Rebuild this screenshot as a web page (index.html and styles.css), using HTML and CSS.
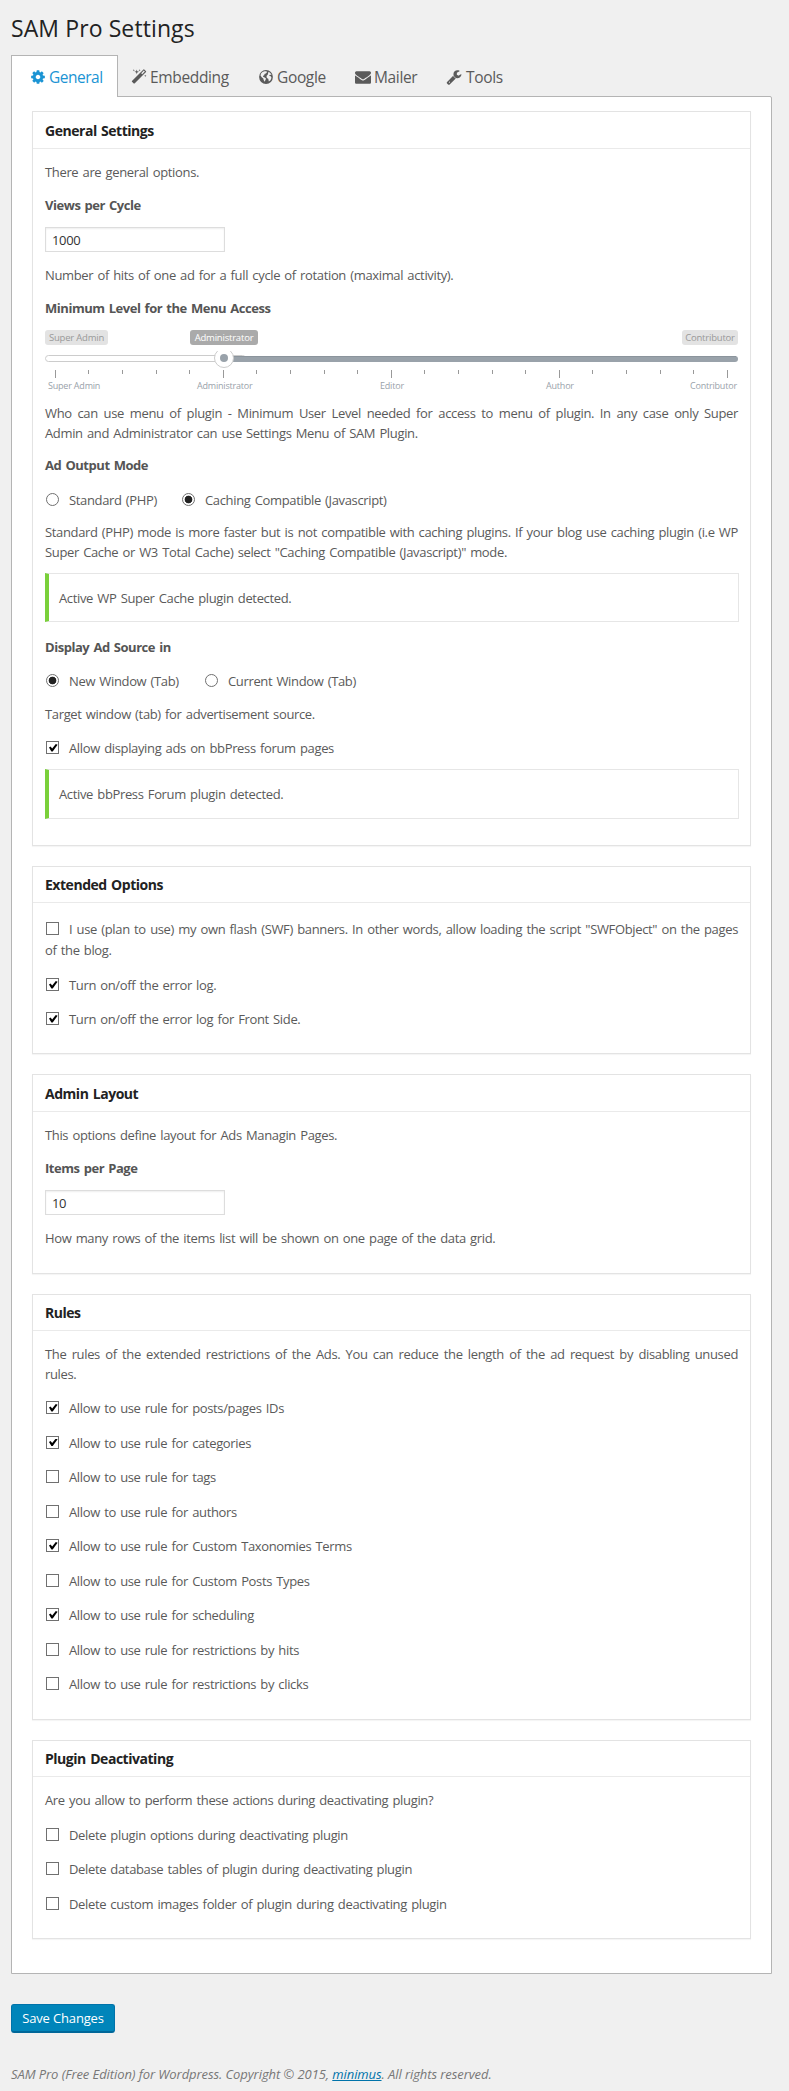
FILE: index.html
```html
<!DOCTYPE html>
<html lang="en">
<head>
<meta charset="utf-8">
<title>SAM Pro Settings</title>
<link rel="stylesheet" href="styles.css">
</head>
<body>
<h1 class="title">SAM Pro Settings</h1>
<nav class="tabs">
  <a class="tab active"><svg class="ico" viewBox="0 0 1792 1792"><path d="M1152 896q0-106-75-181t-181-75-181 75-75 181 75 181 181 75 181-75 75-181zm512-109v222q0 12-8 23t-20 13l-185 28q-19 54-39 91 35 50 107 138 10 12 10 25t-9 23q-27 37-99 108t-94 71q-12 0-26-9l-138-108q-44 23-91 38-16 136-29 186-7 28-36 28h-222q-14 0-24.500-8.500t-11.500-21.500l-28-184q-49-16-90-37l-141 107q-10 9-25 9-14 0-25-11-126-114-165-168-7-10-7-23 0-12 8-23 15-21 51-66.500t54-70.500q-27-50-41-99l-183-27q-13-2-21-12.500t-8-23.500v-222q0-12 8-23t19-13l186-28q14-46 39-92-40-57-107-138-10-12-10-24 0-10 9-23 26-36 98.500-107.500t94.500-71.500q13 0 26 10l138 107q44-23 91-38 16-136 29-186 7-28 36-28h222q14 0 24.500 8.500t11.500 21.500l28 184q49 16 90 37l142-107q9-9 24-9 13 0 25 10 129 119 165 170 7 8 7 22 0 12-8 23-15 21-51 66.500t-54 70.500q26 50 41 98l183 28q13 2 21 12.500t8 23.500z"/></svg><span>General</span></a>
  <a class="tab emb"><svg class="ico" viewBox="0 0 1792 1792"><path d="M1254 581l293-293-107-107-293 293zm447-293q0 27-18 45l-1286 1286q-18 18-45 18t-45-18l-198-198q-18-18-18-45t18-45l1286-1286q18-18 45-18t45 18l198 198q18 18 18 45zm-1351-190l98 30-98 30-30 98-30-98-98-30 98-30 30-98zm350 162l196 60-196 60-60 196-60-196-196-60 196-60 60-196zm930 478l98 30-98 30-30 98-30-98-98-30 98-30 30-98zm-640-640l98 30-98 30-30 98-30-98-98-30 98-30 30-98z"/></svg><span>Embedding</span></a>
  <a class="tab goo"><svg class="ico" viewBox="0 0 16 16"><circle cx="8" cy="8" r="6.900"/><path class="land" d="M4.500 3 6.500 2.200 8.600 2.300 8.900 3.400 7.800 4.400 6.300 5 6.500 6 5.200 6.800 5 7.800 6.600 8.500 8 9.500 7.500 11 6.600 12.800 5.700 11 5.300 9.500 3.700 8.300 2.500 6.600 3 4.600zM10.500 2.800l1.800 1.300 1.300 2-1.600-.4-1 .9 1.700.6.800 1.500-1 2.500-1.700 1.200-.5-2.600-1.500-.8-.3-2 1.300-1.500z"/></svg><span>Google</span></a>
  <a class="tab mai"><svg class="ico" viewBox="0 0 1792 1792"><path d="M1792 710v794q0 66-47 113t-113 47h-1472q-66 0-113-47t-47-113v-794q44 49 101 87 362 246 497 345 57 42 92.500 65.500t94.500 48 110 24.500h2q51 0 110-24.500t94.500-48 92.500-65.500q170-123 498-345 57-39 100-87zm0-294q0 79-49 151t-122 123q-376 261-468 325-10 7-42.500 31t-54 38.500-52 32.500-57.500 27-50 9h-2q-23 0-50-9t-57.500-27-52-32.500-54-38.500-42.500-31q-91-64-262-182.500t-205-142.500q-62-42-117-115.500t-55-136.500q0-78 41.500-130t118.500-52h1472q65 0 112.500 47t47.500 113z"/></svg><span>Mailer</span></a>
  <a class="tab too"><svg class="ico" viewBox="0 0 1792 1792"><path d="M448 1472q0-26-19-45t-45-19-45 19-19 45 19 45 45 19 45-19 19-45zm644-420l-682 682q-37 37-90 37-52 0-91-37l-106-108q-38-36-38-90 0-53 38-91l681-681q39 98 114.500 173.500t173.500 114.500zm634-435q0 39-23 106-47 134-164.500 217.500t-258.500 83.500q-185 0-316.500-131.500t-131.500-316.500 131.500-316.500 316.500-131.500q58 0 121.500 16.500t107.500 46.500q16 11 16 28t-16 28l-293 169v224l193 107q5-3 79-48.500t135.500-81 70.500-35.500q15 0 23.500 10t8.500 25z"/></svg><span>Tools</span></a>
</nav>
<main class="panel">
  <section class="box general">
    <h2>General Settings</h2>
    <p>There are general options.</p>
    <h3>Views per Cycle</h3>
    <div class="field">1000</div>
    <p>Number of hits of one ad for a full cycle of rotation (maximal activity).</p>
    <h3>Minimum Level for the Menu Access</h3>
    <div class="slider">
      <div class="tips"><span class="tip">Super Admin</span><span class="tip now">Administrator</span><span class="tip last">Contributor</span></div>
      <svg class="rail" width="694" height="28" viewBox="0 0 694 28">
        <rect x=".5" y="4.500" width="200" height="6" rx="3" fill="#fff" stroke="#ccc"/>
        <path d="M180 5H690a3 3 0 0 1 0 6H180z" fill="#99a2aa"/>
        <path d="M180 5.500H691" stroke="#8b949c"/>
        <circle cx="179" cy="7" r="9.500" fill="#fff" stroke="#ccc"/>
        <circle cx="179" cy="7" r="4" fill="#99a2aa"/>
        <path stroke="#999" d="M10.500 19v8M178.500 19v8M346.500 19v8M514.500 19v8M682.500 19v8M43.500 19v4M77.500 19v4M111.500 19v4M144.500 19v4M211.500 19v4M245.500 19v4M279.500 19v4M312.500 19v4M379.500 19v4M413.500 19v4M447.500 19v4M480.500 19v4M547.500 19v4M581.500 19v4M615.500 19v4M648.500 19v4"/>
      </svg>
      <div class="scale"><span>Super Admin</span><span>Administrator</span><span>Editor</span><span>Author</span><span>Contributor</span></div>
    </div>
    <p class="tight">Who can use menu of plugin - Minimum User Level needed for access to menu of plugin. In any case only Super Admin and Administrator can use Settings Menu of SAM Plugin.</p>
    <h3 class="m12">Ad Output Mode</h3>
    <div class="opts m15"><span class="radio"></span><span class="lab l1">Standard (PHP)</span><span class="radio on"></span><span class="lab">Caching Compatible (Javascript)</span></div>
    <p class="m12">Standard (PHP) mode is more faster but is not compatible with caching plugins. If your blog use caching plugin (i.e WP Super Cache or W3 Total Cache) select "Caching Compatible (Javascript)" mode.</p>
    <div class="notice">Active WP Super Cache plugin detected.</div>
    <h3 class="m15">Display Ad Source in</h3>
    <div class="opts m14"><span class="radio on"></span><span class="lab l2">New Window (Tab)</span><span class="radio"></span><span class="lab">Current Window (Tab)</span></div>
    <p>Target window (tab) for advertisement source.</p>
    <div class="opts m14"><span class="check on"></span><span class="lab">Allow displaying ads on bbPress forum pages</span></div>
    <div class="notice tall">Active bbPress Forum plugin detected.</div>
  </section>
  <section class="box extended">
    <h2>Extended Options</h2>
    <p class="swf"><span class="check"></span>I use (plan to use) my own flash (SWF) banners. In other words, allow loading the script "SWFObject" on the pages of the blog.</p>
    <div class="opts m15"><span class="check on"></span><span class="lab">Turn on/off the error log.</span></div>
    <div class="opts m14"><span class="check on"></span><span class="lab">Turn on/off the error log for Front Side.</span></div>
  </section>
  <section class="box admin">
    <h2>Admin Layout</h2>
    <p>This options define layout for Ads Managin Pages.</p>
    <h3>Items per Page</h3>
    <div class="field">10</div>
    <p>How many rows of the items list will be shown on one page of the data grid.</p>
  </section>
  <section class="box rules">
    <h2>Rules</h2>
    <p>The rules of the extended restrictions of the Ads. You can reduce the length of the ad request by disabling unused rules.</p>
    <div class="opts m14"><span class="check on"></span><span class="lab">Allow to use rule for posts/pages IDs</span></div>
    <div class="opts"><span class="check on"></span><span class="lab">Allow to use rule for categories</span></div>
    <div class="opts"><span class="check"></span><span class="lab">Allow to use rule for tags</span></div>
    <div class="opts"><span class="check"></span><span class="lab">Allow to use rule for authors</span></div>
    <div class="opts"><span class="check on"></span><span class="lab">Allow to use rule for Custom Taxonomies Terms</span></div>
    <div class="opts"><span class="check"></span><span class="lab">Allow to use rule for Custom Posts Types</span></div>
    <div class="opts"><span class="check on"></span><span class="lab">Allow to use rule for scheduling</span></div>
    <div class="opts"><span class="check"></span><span class="lab">Allow to use rule for restrictions by hits</span></div>
    <div class="opts"><span class="check"></span><span class="lab">Allow to use rule for restrictions by clicks</span></div>
  </section>
  <section class="box plugin">
    <h2>Plugin Deactivating</h2>
    <p>Are you allow to perform these actions during deactivating plugin?</p>
    <div class="opts"><span class="check"></span><span class="lab">Delete plugin options during deactivating plugin</span></div>
    <div class="opts"><span class="check"></span><span class="lab">Delete database tables of plugin during deactivating plugin</span></div>
    <div class="opts"><span class="check"></span><span class="lab">Delete custom images folder of plugin during deactivating plugin</span></div>
  </section>
</main>
<button class="save">Save Changes</button>
<footer class="foot">SAM Pro (Free Edition) for Wordpress. Copyright © 2015, <a class="link">minimus</a>. All rights reserved.</footer>
</body>
</html>
```

FILE: styles.css
```css
* { box-sizing: border-box; }
body { margin: 0; height: 2091px; padding: 12px 17px 0 11px; background: #f0f0f0; color: #5a5a5a; font: 13px/20px "Open Sans", "Noto Sans", sans-serif; }
.title { margin: 0; height: 43px; font-size: 23px; line-height: 32px; font-weight: 400; letter-spacing: .1px; color: #222; }
.tabs { display: flex; height: 42px; position: relative; z-index: 1; font-size: 15.500px; line-height: 44px; letter-spacing: -.35px; color: #5a5a5a; }
.tab { display: flex; align-items: center; gap: 3px; padding-top: 1px; }
.tab.active { width: 107px; padding: 0 0 0 18px; background: #fff; border: 1px solid #b4b4b4; border-bottom: 0; color: #1b94d4; letter-spacing: -.5px; }
.emb { margin-left: 13px; width: 127px; }
.goo { width: 97px; }
.mai { width: 91px; }
.too { gap: 4px; }
.ico { width: 16px; height: 16px; fill: currentColor; flex: none; }
.land { fill: #f0f0f0; }
.panel { height: 1878px; margin-top: -1px; padding: 14px 20px 0; background: #fff; border: 1px solid #b4b4b4; border-radius: 0 2px 0 0; letter-spacing: -.35px; word-spacing: 1.200px; }
.box { width: 719px; margin-bottom: 20px; padding: 0 12px; border: 1px solid #e3e3e3; box-shadow: 0 1px 1px rgba(0,0,0,.04); }
.general { height: 735px; }
.extended { height: 188px; }
.admin { height: 200px; }
.rules { height: 426px; }
.plugin { height: 199px; }
h2 { margin: 0 -12px; padding: 6px 12px 0; height: 36px; font-size: 14px; line-height: 24px; font-weight: 700; letter-spacing: -.47px; color: #222; border-bottom: 1px solid #eaeaea; }
.general h2, .admin h2 { height: 37px; padding-top: 7px; }
p { margin: 13px 0 0; text-align: justify; }
h3 { margin: 13px 0 0; font-size: 13px; line-height: 20px; font-weight: 700; letter-spacing: -.46px; color: #555; }
.field { margin-top: 12px; width: 180px; height: 25px; padding-left: 6px; line-height: 24px; color: #333; border: 1px solid #ddd; box-shadow: inset 0 1px 2px rgba(0,0,0,.07); }
p.tight { margin-top: 0; }
.opts { display: flex; align-items: flex-start; height: 20px; margin-top: 14.500px; }
.m12 { margin-top: 12px; }
.m14 { margin-top: 14px; }
.m15 { margin-top: 15px; }
.check, .radio { display: inline-block; flex: none; width: 13px; height: 13px; margin: 3px 10px 0 1px; background: #fff; border: 1px solid #707070; }
.radio { border-radius: 50%; }
.radio.on { background: radial-gradient(circle, #222 0 3.500px, #fff 4.200px); }
.check.on::after { content: ""; display: block; width: 9px; height: 8px; margin: 2px 0 0 2px; background: #000; clip-path: polygon(0 3.500px, 1.500px 2.500px, 3.200px 4.400px, 6.800px 0, 8.600px .8px, 3.700px 7.400px, 2.400px 7.400px); }
.l1 { width: 112px; }
.l2 { width: 135px; }
.notice { margin: 11px -1px 0 0; height: 49px; padding-left: 10px; line-height: 48px; border: 1px solid #e6e6e6; border-left: 4px solid #7ad03a; }
.notice.tall { height: 50px; line-height: 49px; }
.slider { height: 85px; padding-top: 12px; font-size: 9px; line-height: 15px; letter-spacing: -.2px; word-spacing: 0; }
.tips { display: flex; height: 15px; font-size: 9.500px; }
.tip { width: 63px; text-align: center; color: #999; background: #e3e3e3; border-radius: 3px; }
.tip.now { width: 68px; margin-left: 82px; background: #aaa; color: #fff; }
.tip.last { width: 56px; margin-left: auto; }
.rail { display: block; margin-top: 6px; }
.scale { display: grid; grid-template-columns: 149px 183px 166px 144px auto; padding-left: 3px; color: #99a2aa; line-height: 14px; white-space: nowrap; }
.swf { margin-top: 16px; line-height: 20.500px; }
.swf .check { margin-top: 0; vertical-align: -1px; }
.save { display: block; margin-top: 30px; width: 104px; height: 29px; padding: 0; font: 13px/26px "Open Sans", sans-serif; letter-spacing: -.15px; color: #fff; background: #0085ba; border: 1px solid #0073aa; border-bottom: 2px solid #006799; border-radius: 3px; }
.foot { margin-top: 31px; font-style: italic; letter-spacing: -.08px; color: #777; }
.link { color: #0073aa; text-decoration: underline; }
```
